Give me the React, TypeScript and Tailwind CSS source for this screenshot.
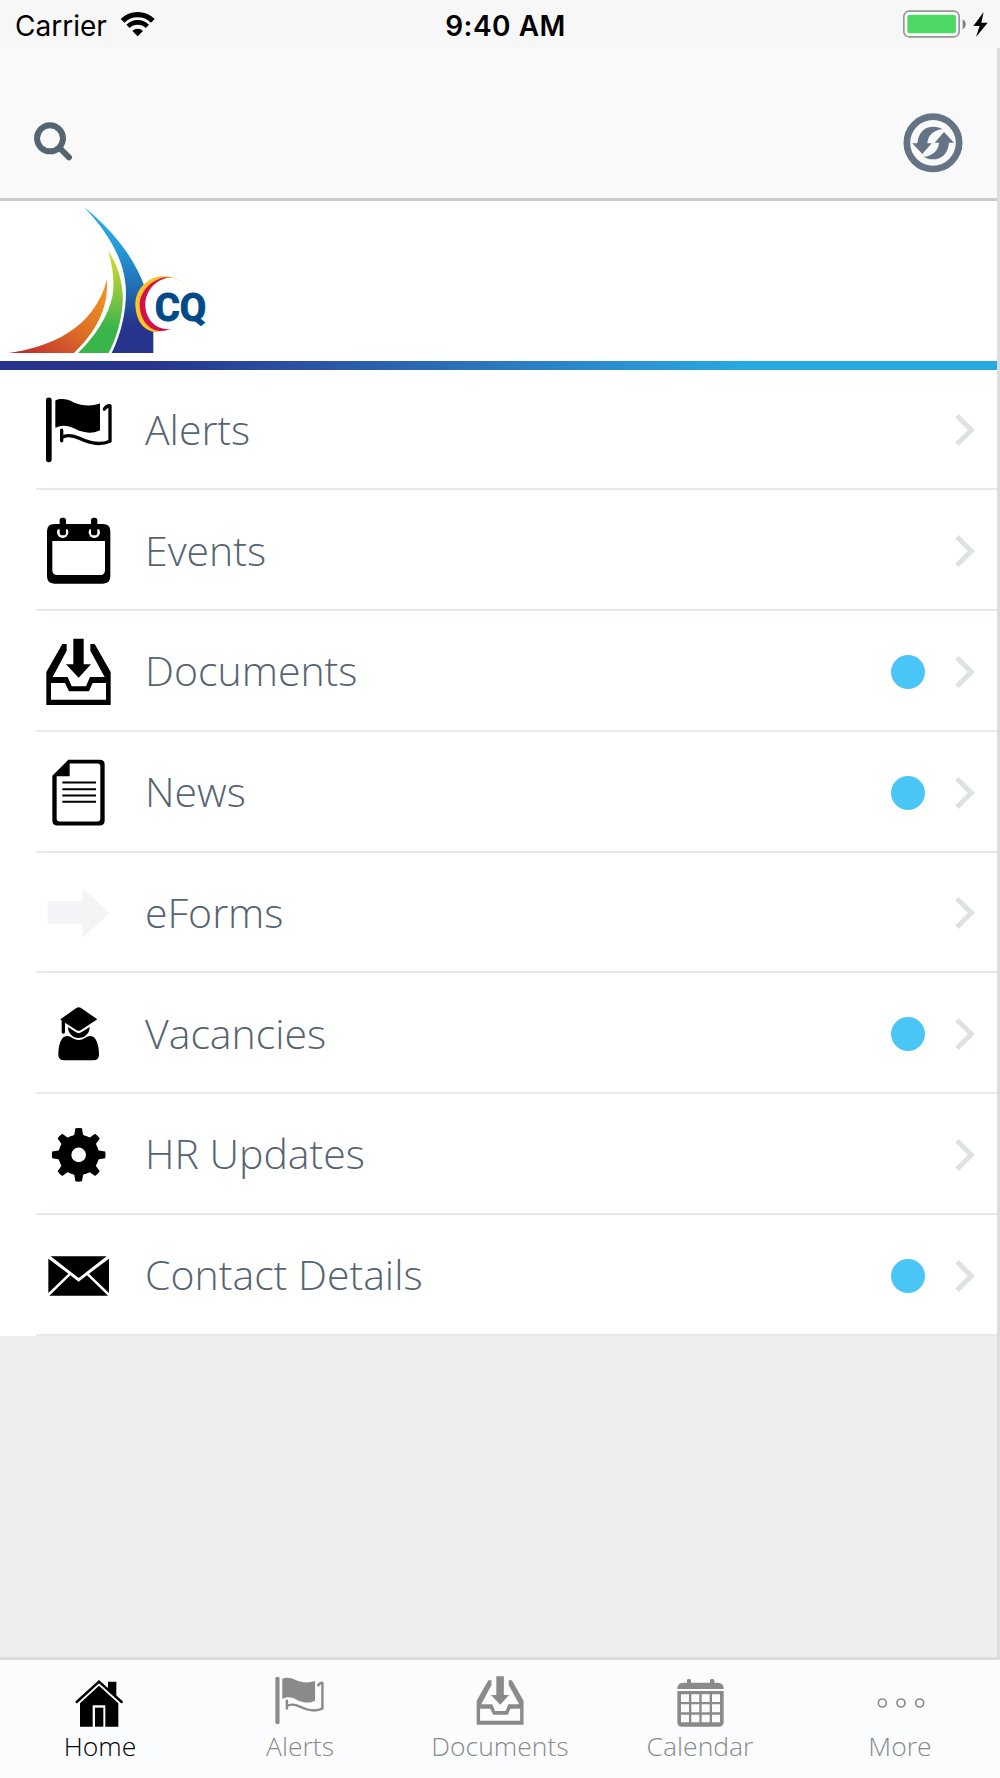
import React from 'react';

interface IconProps {
  className?: string;
  viewBox: string;
}

interface MenuItem {
  label: string;
  icon: React.ReactNode;
  unread?: boolean;
}

interface TabItem {
  label: string;
  icon: React.ReactNode;
  active?: boolean;
}

const FlagIcon: React.FC<IconProps> = ({ className, viewBox }) => (
  <svg className={className} viewBox={viewBox} fill="currentColor">
    <rect x="48" y="53" width="17" height="194" rx="8" />
    <path d="M76 62C92 54 112 57 130 67C157 78 182 80 210 71V151C186 163 160 160 135 147C113 136 96 134 76 144Z" />
    <path
      d="M95 151V183M95 173C112 162 130 167 150 176C182 192 212 196 240 184V78C234 77 227 82 223 88"
      fill="none"
      stroke="currentColor"
      strokeWidth="10"
      strokeLinecap="round"
      strokeLinejoin="round"
    />
  </svg>
);

const InboxIcon: React.FC<IconProps> = ({ className, viewBox }) => (
  <svg className={className} viewBox={viewBox} fill="currentColor">
    <path d="M130 55H161V132H183L146 172L108 132H130Z" />
    <path
      fillRule="evenodd"
      d="M97 71H110V91L68 170H113L125 198H168L180 170H224L181 91V71H194L242 155V254H49V155ZM63 188V238H228V188H188L177 213H117L105 188Z"
    />
  </svg>
);

const EventsIcon: React.FC<IconProps> = ({ className, viewBox }) => (
  <svg className={className} viewBox={viewBox} fill="currentColor">
    <path
      fillRule="evenodd"
      d="M73 432H219Q241 432 241 454V589Q241 611 219 611H73Q51 611 51 589V454Q51 432 73 432ZM67 483V571Q67 585 81 585H211Q225 585 225 571V483Z"
    />
    <circle cx="98" cy="457" r="17" fill="#fff" />
    <circle cx="193" cy="457" r="17" fill="#fff" />
    <path d="M78 432H118V448H78ZM173 432H213V448H173Z" />
    <rect x="89" y="413" width="19" height="53" rx="8" />
    <rect x="183" y="413" width="19" height="53" rx="8" />
  </svg>
);

const NewsIcon: React.FC<IconProps> = ({ className, viewBox }) => (
  <svg className={className} viewBox={viewBox} fill="currentColor">
    <path
      fillRule="evenodd"
      d="M115 418H209Q224 418 224 433V600Q224 615 209 615H82Q67 615 67 600V466ZM119 429V467H80V594Q80 603 89 603H202Q211 603 211 594V438Q211 429 202 429Z"
    />
    <path d="M97 483H198V489H97ZM97 503H198V509H97ZM97 522H198V528H97ZM97 541H198V547H97Z" />
  </svg>
);

const ArrowIcon: React.FC<IconProps> = ({ className, viewBox }) => (
  <svg className={className} viewBox={viewBox} fill="#f3f4f6">
    <path d="M53 125H157V84L238 160L157 235V192H53Z" />
  </svg>
);

const GraduateIcon: React.FC<IconProps> = ({ className, viewBox }) => (
  <svg className={className} viewBox={viewBox} fill="currentColor">
    <path d="M140 443Q146 440 152 443L202 478L152 511Q146 514 140 511L105 488V517Q105 521 100 521Q95 521 95 517V482L91 478Z" />
    <path d="M114 501L138 517Q146 522 154 517L179 501C179 520 165 534 146 534C128 534 114 520 114 501Z" />
    <path d="M111 528Q120 528 127 534Q146 546 165 534Q172 528 181 528C199 528 207 556 207 584Q207 601 189 601H103Q85 601 85 584C85 556 93 528 111 528Z" />
  </svg>
);

const GEAR_ANGLES = [0, 45, 90, 135, 180, 225, 270, 315];

const GearIcon: React.FC<IconProps> = ({ className, viewBox }) => (
  <svg className={className} viewBox={viewBox} fill="currentColor">
    <circle cx="146" cy="133.5" r="40.5" fill="none" stroke="currentColor" strokeWidth="37" />
    {GEAR_ANGLES.map(angle => (
      <path
        key={angle}
        d="M136 54Q146 52 156 54L159 73Q164 76 172 79V90H120V79Q128 76 133 73Z"
        transform={`rotate(${angle} 146 133.5)`}
      />
    ))}
  </svg>
);

const MailIcon: React.FC<IconProps> = ({ className, viewBox }) => (
  <svg className={className} viewBox={viewBox} fill="currentColor">
    <path d="M62 436H230L146 501ZM55 443L115 488L55 546ZM237 443V546L177 488ZM58 554L121 493L146 512L171 493L234 554Z" />
  </svg>
);

const HomeIcon: React.FC<IconProps> = ({ className, viewBox }) => (
  <svg className={className} viewBox={viewBox} fill="currentColor">
    <path d="M324 125H349V170L324 147Z" />
    <path d="M230 186L297 125L365 186" fill="none" stroke="currentColor" strokeWidth="7.5" strokeLinecap="round" />
    <path d="M297 137L355 190V260H316V196H278V260H240V190Z" />
    <path d="M285 203H310V260H285Z" />
  </svg>
);

const CalendarIcon: React.FC<IconProps> = ({ className, viewBox }) => (
  <svg className={className} viewBox={viewBox} fill="currentColor">
    <path d="M861 128V121Q861 117 867 117Q873 117 873 121V128H930V121Q930 117 936 117Q943 117 943 121V128H953Q971 128 971 147H832Q832 128 850 128H861Z" />
    <path
      fillRule="evenodd"
      d="M832 153H971V245Q971 260 956 260H847Q832 260 832 245ZM843 163V186H867V163ZM874 163V186H898V163ZM905 163V186H929V163ZM936 163V186H960V163ZM843 193V217H867V193ZM874 193V217H898V193ZM905 193V217H929V193ZM936 193V217H960V193ZM843 224V247H867V224ZM874 224V247H898V224ZM905 224V247H929V224ZM936 224V247H960V224Z"
    />
  </svg>
);

const MoreIcon: React.FC<IconProps> = ({ className, viewBox }) => (
  <svg className={className} viewBox={viewBox} fill="none" stroke="currentColor" strokeWidth="5">
    <circle cx="367" cy="189" r="12" />
    <circle cx="423" cy="189" r="12" />
    <circle cx="479" cy="189" r="12" />
  </svg>
);

const Logo = () => (
  <svg className="w-[230px] h-[160px]" viewBox="0 18 690 480">
    <defs>
      <linearGradient id="blue" x1="0" y1="0" x2="0" y2="1">
        <stop offset="0" stopColor="#29b5e8" />
        <stop offset="0.3" stopColor="#2498d5" />
        <stop offset="0.55" stopColor="#1f6fb4" />
        <stop offset="0.8" stopColor="#27358c" />
        <stop offset="1" stopColor="#27358c" />
      </linearGradient>
      <linearGradient id="green" x1="0" y1="0" x2="0" y2="1">
        <stop offset="0" stopColor="#d6e021" />
        <stop offset="0.4" stopColor="#8fc740" />
        <stop offset="0.75" stopColor="#3ab54a" />
      </linearGradient>
      <linearGradient id="orange" x1="0" y1="1" x2="1" y2="0">
        <stop offset="0" stopColor="#bb2530" />
        <stop offset="0.5" stopColor="#dc6e27" />
        <stop offset="1" stopColor="#f8981d" />
      </linearGradient>
      <linearGradient id="yellow" x1="0" y1="0" x2="1" y2="0">
        <stop offset="0" stopColor="#ffc629" />
        <stop offset="0.5" stopColor="#fdb92a" />
        <stop offset="1" stopColor="#ffe9b0" />
      </linearGradient>
    </defs>
    <path d="M251 35C325 94 399 176 435 278L460 330V474H335C370 405 383 320 376 263C366 180 319 107 251 35Z" fill="url(#blue)" />
    <path d="M325 168C363 225 374 292 366 345C359 397 344 440 326 474H234C283 427 325 365 338 300C345 255 336 210 325 168Z" fill="url(#green)" />
    <path d="M321 253C326 344 285 413 222 474H26C149 457 283 402 321 253Z" fill="url(#orange)" />
    <circle cx="500" cy="329" r="77" fill="#fff" />
    <path d="M561 277C544 251 515 242 484 244C438 249 406 286 406 330C408 377 431 408 467 411L490 407C454 399 430 370 430 330C431 287 460 253 506 248C533 247 549 262 561 277Z" fill="url(#yellow)" />
    <path d="M514 246C462 243 419 286 419 330C420 375 448 411 489 408L516 402C468 408 436 372 436 330C436 286 469 251 514 246Z" fill="#d3124a" />
    <text
      x="464"
      y="379"
      textLength="155"
      lengthAdjust="spacingAndGlyphs"
      fill="#004b87"
      stroke="#004b87"
      strokeWidth="3"
      className="font-['Roboto'] font-bold text-[118px]"
    >
      CQ
    </text>
  </svg>
);

const MENU_ITEMS: MenuItem[] = [
  { label: 'Alerts', icon: <FlagIcon className="size-18" viewBox="36 42.5 216 216" /> },
  { label: 'Events', icon: <EventsIcon className="size-18" viewBox="36 405 216 216" /> },
  { label: 'Documents', icon: <InboxIcon className="size-18" viewBox="36 47 216 216" />, unread: true },
  { label: 'News', icon: <NewsIcon className="size-18" viewBox="36 409.5 216 216" />, unread: true },
  { label: 'eForms', icon: <ArrowIcon className="size-18" viewBox="36 52 216 216" /> },
  { label: 'Vacancies', icon: <GraduateIcon className="size-18" viewBox="36 414 216 216" />, unread: true },
  { label: 'HR Updates', icon: <GearIcon className="size-18" viewBox="36 26 216 216" /> },
  { label: 'Contact Details', icon: <MailIcon className="size-18" viewBox="36 387 216 216" />, unread: true },
];

const TABS: TabItem[] = [
  { label: 'Home', icon: <HomeIcon className="size-15" viewBox="210 96 180 180" />, active: true },
  { label: 'Alerts', icon: <FlagIcon className="size-15" viewBox="26 34 245 245" /> },
  { label: 'Documents', icon: <InboxIcon className="size-15" viewBox="21.6 37 247 247" /> },
  { label: 'Calendar', icon: <CalendarIcon className="size-15" viewBox="810 96 180 180" /> },
  { label: 'More', icon: <MoreIcon className="size-15" viewBox="330 96 180 180" /> },
];

const StatusBar = () => (
  <div className="h-12 shrink-0 bg-[#f7f7f7] grid grid-cols-3 items-center text-black font-['Inter',sans-serif] text-[28px]">
    <div className="flex items-center pl-[15px]">
      <span className="w-[105px] pt-[3px]">Carrier</span>
      <svg className="w-[36px] h-[26px]" viewBox="360 33 108 78">
        <path d="M367.7 62.7A64 64 0 0 1 458.3 62.7" fill="none" stroke="currentColor" strokeWidth="16" />
        <path d="M384 79A41 41 0 0 1 442 79" fill="none" stroke="currentColor" strokeWidth="14" />
        <path d="M413 109L397 93A23 23 0 0 1 429 93Z" fill="currentColor" />
      </svg>
    </div>
    <div className="text-center font-semibold pt-[3px] pl-[11px] tracking-[0.5px]">9:40 AM</div>
    <div className="flex justify-end pr-3">
      <svg className="w-[86px] h-[28px]" viewBox="607 30 258 84">
        <rect x="612.5" y="33.5" width="166" height="77" rx="16" fill="#fff" stroke="#969696" strokeWidth="5" />
        <rect x="623" y="44" width="146" height="56" rx="8" fill="#4cd964" />
        <path d="M789 58Q798 63 798 73Q798 83 789 88Z" fill="#808080" />
        <path d="M852 36L821 78H840L829 111L864 68H845Z" fill="currentColor" />
      </svg>
    </div>
  </div>
);

const NavBar = () => (
  <div className="h-[153px] shrink-0 bg-[#f9f9f9] border-b-[3px] border-[#cbcbcb] flex justify-between pl-[33px] pr-[34px]">
    <svg className="w-10 h-10 mt-[73px]" viewBox="99 363 120 120" fill="none" stroke="#566472" strokeWidth="18">
      <circle cx="150" cy="415" r="39" />
      <path d="M179 444L207 472" strokeLinecap="round" />
    </svg>
    <svg className="w-[60px] h-[60px] mt-[65px]" viewBox="608 339 180 180" fill="#647484">
      <circle cx="698" cy="428.5" r="78.5" fill="none" stroke="#647484" strokeWidth="20" />
      <path d="M636 430H651C654 397 673 380 699 380C711 380 719 383 727 388C702 389 683 405 681 430H694L666 462Z" />
      <path
        d="M636 430H651C654 397 673 380 699 380C711 380 719 383 727 388C702 389 683 405 681 430H694L666 462Z"
        transform="rotate(180 698.5 429)"
      />
    </svg>
  </div>
);

const MenuRow: React.FC<{ item: MenuItem }> = ({ item }) => (
  <div className="pl-9 bg-white">
    <div className="h-[120.75px] pt-[3px] pl-[6px] pr-[21px] border-b-2 border-[#e6e9ed] flex items-center">
      {item.icon}
      <span className="flex-1 pl-[31px] pb-[2px] text-[41px] leading-none font-light text-[#566472]">{item.label}</span>
      {item.unread && <span className="size-[34px] rounded-full bg-[#4ac6f6] mr-[30px]" />}
      <svg className="w-[21px] h-[34px]" viewBox="285 194 63 102" fill="none" stroke="#dee2e5" strokeWidth="15">
        <path d="M291 202L334 245L291 288" />
      </svg>
    </div>
  </div>
);

const TabBar = () => (
  <div className="h-[121px] shrink-0 bg-[#fbfcfe] border-t-[3px] border-[#dcdcdc] grid grid-cols-5">
    {TABS.map(tab => (
      <div key={tab.label} className={`flex flex-col items-center pt-3 ${tab.active ? 'text-black' : 'text-[#8a8a8a]'}`}>
        {tab.icon}
        <span className="pt-px text-[26.5px] leading-none font-light">{tab.label}</span>
      </div>
    ))}
  </div>
);

const App = () => (
  <div className="w-[1000px] h-[1778px] flex flex-col overflow-hidden bg-[#ededed] font-['Open_Sans',sans-serif]">
    <StatusBar />
    <div className="flex-1 flex flex-col border-r-[3px] border-[#dcdddd]">
      <NavBar />
      <div className="h-[160px] shrink-0 bg-white">
        <Logo />
      </div>
      <div className="h-[8.6px] shrink-0 bg-linear-to-r from-[#27348b] from-15% to-[#27aae1] to-75%" />
      {MENU_ITEMS.map(item => (
        <MenuRow key={item.label} item={item} />
      ))}
    </div>
    <TabBar />
  </div>
);

export default App;
